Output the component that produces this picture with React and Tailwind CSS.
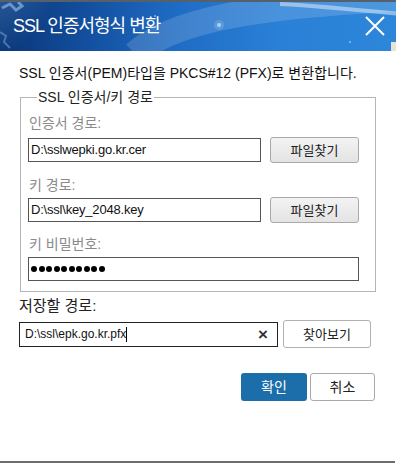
import React from "react";

const FONT = { fontFamily: '"Liberation Sans", "Noto Sans CJK KR", sans-serif' };

function FileButton({ children, className = "" }) {
  return (
    <button
      className={
        "h-[26px] rounded-[3px] border border-[#a9a9a9] bg-[linear-gradient(#f3f3f3,#e3e3e3)] text-[13px] leading-none text-[#222] " +
        className
      }
    >
      {children}
    </button>
  );
}

function TextBox({ value, className = "" }) {
  return (
    <div
      className={
        "h-[24px] border border-[#555] bg-white flex items-center pl-[2px] text-[13px] tracking-[-0.2px] text-[#111] " +
        className
      }
    >
      {value}
    </div>
  );
}

export default function App() {
  return (
    <div className="w-[396px] h-[463px] bg-white flex flex-col overflow-hidden" style={FONT}>
      {/* Title bar */}
      <div className="relative h-[51px] shrink-0 border-t-2 border-[#56606b] bg-[linear-gradient(90deg,#0a3576_0%,#134f9f_22%,#1f6cc4_45%,#2a80d6_70%,#2c86da_100%)] overflow-hidden">
        <svg className="absolute inset-0" width="396" height="49" viewBox="0 0 396 49">
          <defs>
            <radialGradient id="glob" cx="0" cy="0" r="1">
              <stop offset="0" stopColor="#6aa6e0" stopOpacity="0.55" />
              <stop offset="1" stopColor="#6aa6e0" stopOpacity="0" />
            </radialGradient>
          </defs>
          <rect x="-30" y="-30" width="90" height="90" fill="url(#glob)" />
          <path d="M2 6 L10 2 L16 8 L22 4 L18 0" stroke="#9cc4ee" strokeOpacity="0.6" strokeWidth="3" fill="none" />
          <path d="M0 30 L6 34 L4 40 L10 46" stroke="#8db8e6" strokeOpacity="0.45" strokeWidth="2" fill="none" />
          <path d="M135 52 C 170 20, 250 2, 420 -4" stroke="#ffffff" strokeOpacity="0.15" strokeWidth="26" fill="none" />
          <path d="M280 2 C 320 4, 360 8, 400 12" stroke="#dbeaf8" strokeOpacity="0.55" strokeWidth="4" fill="none" />
          <circle cx="219" cy="23" r="2" fill="#bfe0ff" opacity="0.8" />
          <circle cx="219" cy="23" r="5" fill="#bfe0ff" opacity="0.2" />
          <circle cx="155" cy="14" r="1" fill="#cfe6ff" opacity="0.6" />
          <circle cx="350" cy="40" r="1" fill="#cfe6ff" opacity="0.6" />
          <rect x="391" y="40" width="5" height="9" fill="#e9e3d6" />
        </svg>
        <div className="relative flex h-full items-center justify-between pl-[13px] pr-[7px]">
          <span className="text-white text-[18px] leading-none tracking-[-1px] pb-[1px]">
            SSL 인증서형식 변환
          </span>
          <svg width="22" height="22" viewBox="0 0 22 22" className="mr-[3px] mt-[-2px]">
            <path d="M2 2 L20 20 M20 2 L2 20" stroke="#ffffff" strokeWidth="2" fill="none" />
          </svg>
        </div>
      </div>

      {/* Body */}
      <div className="flex flex-col">
        <p className="mt-[12px] pl-[19px] text-[14px] leading-[20px] text-[#111]">
          SSL 인증서(PEM)타입을 PKCS#12 (PFX)로 변환합니다.
        </p>

        <fieldset className="mt-[4px] ml-[20px] w-[356px] border border-[#b5b5b5] pl-[7px] pr-[16px] pt-[6px] pb-[10px]">
          <legend className="ml-[9px] px-[1px] text-[14px] leading-[20px] text-[#222]">
            SSL 인증서/키 경로
          </legend>

          <div className="text-[14px] leading-[20px] text-[#8a8a8a] pl-[1px]">인증서 경로:</div>
          <div className="mt-[4px] flex items-center gap-[9px]">
            <TextBox value="D:\sslwepki.go.kr.cer" className="w-[233px]" />
            <FileButton className="w-[89px]">파일찾기</FileButton>
          </div>

          <div className="mt-[12px] text-[14px] leading-[20px] text-[#8a8a8a] pl-[1px]">키 경로:</div>
          <div className="mt-[2px] flex items-center gap-[9px]">
            <TextBox value="D:\ssl\key_2048.key" className="w-[233px]" />
            <FileButton className="w-[89px]">파일찾기</FileButton>
          </div>

          <div className="mt-[11px] text-[14px] leading-[20px] text-[#8a8a8a] pl-[1px]">키 비밀번호:</div>
          <div className="mt-[3px] h-[24px] w-[331px] border border-[#555] flex items-center gap-[1.5px] pl-[2px]">
            {Array.from({ length: 10 }).map((_, i) => (
              <span key={i} className="w-[6px] h-[6px] rounded-full bg-black" />
            ))}
          </div>
        </fieldset>

        <div className="mt-[4px] pl-[19px] text-[15px] leading-[20px] text-[#222]">저장할 경로:</div>
        <div className="mt-[4px] pl-[19px] flex items-center gap-[5px]">
          <div className="h-[25px] w-[259px] border border-[#222] flex items-center pl-[5px] pr-[9px] text-[12px] text-[#111]">
            <span>D:\ssl\epk.go.kr.pfx</span>
            <span className="w-px h-[15px] bg-black" />
            <span className="ml-auto text-[17px] font-bold leading-none text-[#333]">×</span>
          </div>
          <button className="h-[28px] w-[88px] rounded-[3px] border border-[#b0b0b0] bg-white text-[13px] leading-none text-[#222]">
            찾아보기
          </button>
        </div>

        <div className="mt-[25px] flex justify-end gap-[3px] pr-[21px]">
          <button className="h-[28px] w-[66px] rounded-[3px] bg-[#1b6ea9] text-white text-[14px] leading-none">
            확인
          </button>
          <button className="h-[28px] w-[65px] rounded-[3px] border border-[#aaaaaa] bg-white text-[14px] leading-none text-[#222]">
            취소
          </button>
        </div>
      </div>

      <div className="mt-auto h-[2px] w-[395px] bg-[#6d6d6d]" />
    </div>
  );
}
